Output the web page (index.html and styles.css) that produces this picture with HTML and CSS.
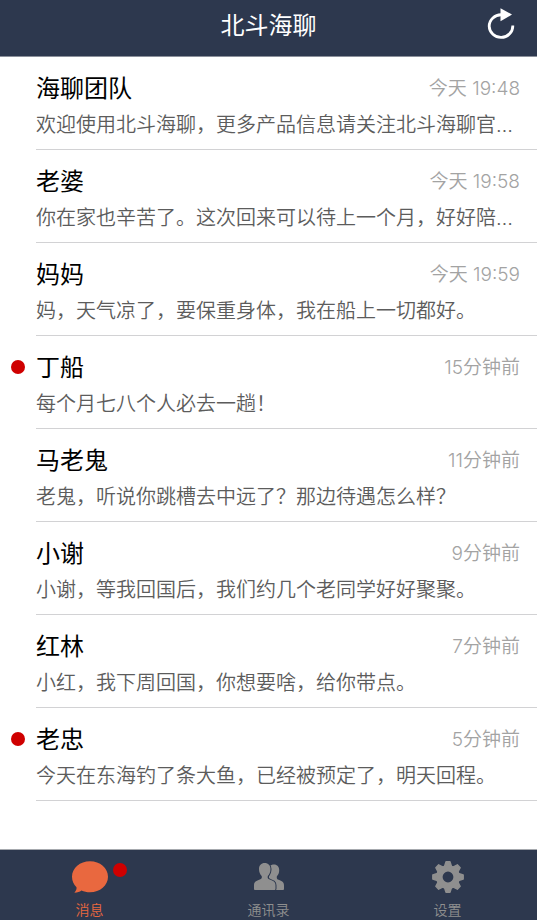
FILE: index.html
```html
<!DOCTYPE html>
<html lang="zh-CN">
<head>
<meta charset="utf-8">
<meta name="viewport" content="width=device-width, initial-scale=1">
<title>北斗海聊</title>
<link rel="stylesheet" href="styles.css">
</head>
<body>
<header class="topbar">
  <h1 class="title">北斗海聊</h1>
  <button class="refresh" type="button" aria-label="刷新">
    <svg viewBox="0 0 32 36" width="32" height="36" aria-hidden="true">
      <path d="M17 8.800C9.800 8.200 4.200 14 4.200 20.200A11.800 11.600 0 1 0 27.800 19.500" fill="none" stroke="#fff" stroke-width="2.800"/>
      <path d="M15.500 2.200v13L27 8.600z" fill="#fff"/>
    </svg>
  </button>
</header>
<main class="content">
  <ul class="chats">
    <li class="chat"><div class="line"><h2 class="name">海聊团队</h2><time class="time">今天 19:48</time></div><p class="preview">欢迎使用北斗海聊，更多产品信息请关注北斗海聊官…</p></li>
    <li class="chat"><div class="line"><h2 class="name">老婆</h2><time class="time">今天 19:58</time></div><p class="preview">你在家也辛苦了。这次回来可以待上一个月，好好陪…</p></li>
    <li class="chat"><div class="line"><h2 class="name">妈妈</h2><time class="time">今天 19:59</time></div><p class="preview">妈，天气凉了，要保重身体，我在船上一切都好。</p></li>
    <li class="chat unread"><div class="line"><h2 class="name">丁船</h2><time class="time">15分钟前</time></div><p class="preview">每个月七八个人必去一趟！</p></li>
    <li class="chat"><div class="line"><h2 class="name">马老鬼</h2><time class="time">11分钟前</time></div><p class="preview">老鬼，听说你跳槽去中远了？那边待遇怎么样？</p></li>
    <li class="chat"><div class="line"><h2 class="name">小谢</h2><time class="time">9分钟前</time></div><p class="preview">小谢，等我回国后，我们约几个老同学好好聚聚。</p></li>
    <li class="chat"><div class="line"><h2 class="name">红林</h2><time class="time">7分钟前</time></div><p class="preview">小红，我下周回国，你想要啥，给你带点。</p></li>
    <li class="chat unread"><div class="line"><h2 class="name">老忠</h2><time class="time">5分钟前</time></div><p class="preview">今天在东海钓了条大鱼，已经被预定了，明天回程。</p></li>
  </ul>
</main>
<nav class="tabs">
  <a class="tab active" href="#messages">
    <span class="icon badge">
      <svg viewBox="0 0 36 32" width="36" height="32" aria-hidden="true">
        <path d="M18 .2C8 .2 0 7 0 15.700c0 4.300 1.700 7.800 4.500 10.600.3 2-.5 3.700-2.100 5.400 3.200-.1 5.300-1 7-2.300 2.600 1.200 5.500 1.800 8.600 1.800 10 0 18-6.800 18-15.500S28 .2 18 .2z" fill="currentColor"/>
      </svg>
    </span>
    <span class="label">消息</span>
  </a>
  <a class="tab" href="#contacts">
    <span class="icon">
      <svg viewBox="0 0 30 32" width="30" height="32" aria-hidden="true">
        <path d="M15 5.500C16.500 4 18.400 3.500 20 3.500c3.200 0 5.200 2.300 5.200 5.600 0 2.700-.9 4.900-2.300 6.200-.4 2 .1 2.900 1.700 3.500 3.400 1.200 5.400 2.300 5.400 5.800v3.200c0 .8-.4 1.200-1.200 1.200H15z" fill="currentColor"/>
        <path d="M10.700 2C7.200 2 5 4.500 5 8c0 3.100 1.100 5.500 2.700 7 .5 2-.1 2.900-1.900 3.600C2.400 19.900 0 20.900 0 24.200v3.500c0 .9.400 1.300 1.300 1.300h18.900c.9 0 1.300-.4 1.300-1.300v-3.500c0-3.300-2.400-4.300-5.800-5.600-1.800-.7-2.400-1.600-1.900-3.600 1.600-1.500 2.700-3.900 2.700-7 0-3.500-2.300-6-5.800-6z" fill="currentColor" stroke="#2d384e" stroke-width="2" paint-order="stroke"/>
      </svg>
    </span>
    <span class="label">通讯录</span>
  </a>
  <a class="tab" href="#settings">
    <span class="icon">
      <svg viewBox="-16 -16 32 32" width="32" height="32" aria-hidden="true">
        <g fill="currentColor" stroke="currentColor" stroke-width="1.400" stroke-linejoin="round">
          <path id="tooth" d="M-2-15.200H2L3.500-10.500H-3.500z"/>
          <use href="#tooth" transform="rotate(45)"/>
          <use href="#tooth" transform="rotate(90)"/>
          <use href="#tooth" transform="rotate(135)"/>
          <use href="#tooth" transform="rotate(180)"/>
          <use href="#tooth" transform="rotate(225)"/>
          <use href="#tooth" transform="rotate(270)"/>
          <use href="#tooth" transform="rotate(315)"/>
        </g>
        <circle r="8.700" fill="none" stroke="currentColor" stroke-width="6.600"/>
      </svg>
    </span>
    <span class="label">设置</span>
  </a>
</nav>
</body>
</html>
```
FILE: styles.css
```css
* {
  box-sizing: border-box;
}

body {
  margin: 0;
  min-height: 100vh;
  display: flex;
  flex-direction: column;
  background: #fff;
  color: #000;
  font-family: Inter, "Noto Sans CJK SC", sans-serif;
}

h1, h2, p, ul {
  margin: 0;
  padding: 0;
  font-weight: 350;
}

.topbar {
  display: grid;
  grid-template-columns: 1fr auto 1fr;
  align-items: start;
  height: 57px;
  padding: 6px 20px 0;
  background: #2d384e;
  border-bottom: 1px solid #8b909b;
}

.title {
  grid-column: 2;
  color: #fff;
  font-size: 24px;
  line-height: 40px;
  font-weight: 400;
}

.refresh {
  justify-self: end;
  padding: 0;
  border: 0;
  background: none;
  line-height: 0;
  cursor: pointer;
}

.content {
  flex: 1;
}

.chats {
  list-style: none;
  padding-left: 36px;
}

.chat {
  position: relative;
  height: 93px;
  padding: 14px 17px 0 0;
  border-bottom: 1px solid #d2d2d4;
}

.line {
  display: flex;
  justify-content: space-between;
  align-items: center;
}

.name {
  font-size: 24px;
  line-height: 36px;
  font-weight: 400;
}

.time {
  color: #a3a3a3;
  font-size: 19px;
  line-height: 32px;
  font-weight: 350;
}

.preview {
  overflow: hidden;
  white-space: nowrap;
  color: #5c5c5c;
  font-size: 20px;
  line-height: 36px;
}

.unread::before,
.badge::after {
  content: "";
  position: absolute;
  width: 14px;
  height: 14px;
  border-radius: 50%;
  background: #cf0000;
}

.unread::before {
  left: -25px;
  top: 24px;
}

.tabs {
  display: grid;
  grid-template-columns: repeat(3, 1fr);
  height: 71px;
  background: #2d384e;
  border-top: 1px solid #a6a9ae;
}

.tab {
  display: flex;
  flex-direction: column;
  align-items: center;
  gap: 7px;
  padding-top: 11px;
  color: #8f8f8f;
  text-decoration: none;
}

.active {
  color: #e9683f;
}

.icon {
  position: relative;
  display: flex;
  height: 32px;
}

.badge::after {
  left: 41px;
  top: 2px;
}

.label {
  font-size: 14px;
  line-height: 20px;
  font-weight: 350;
}
```
